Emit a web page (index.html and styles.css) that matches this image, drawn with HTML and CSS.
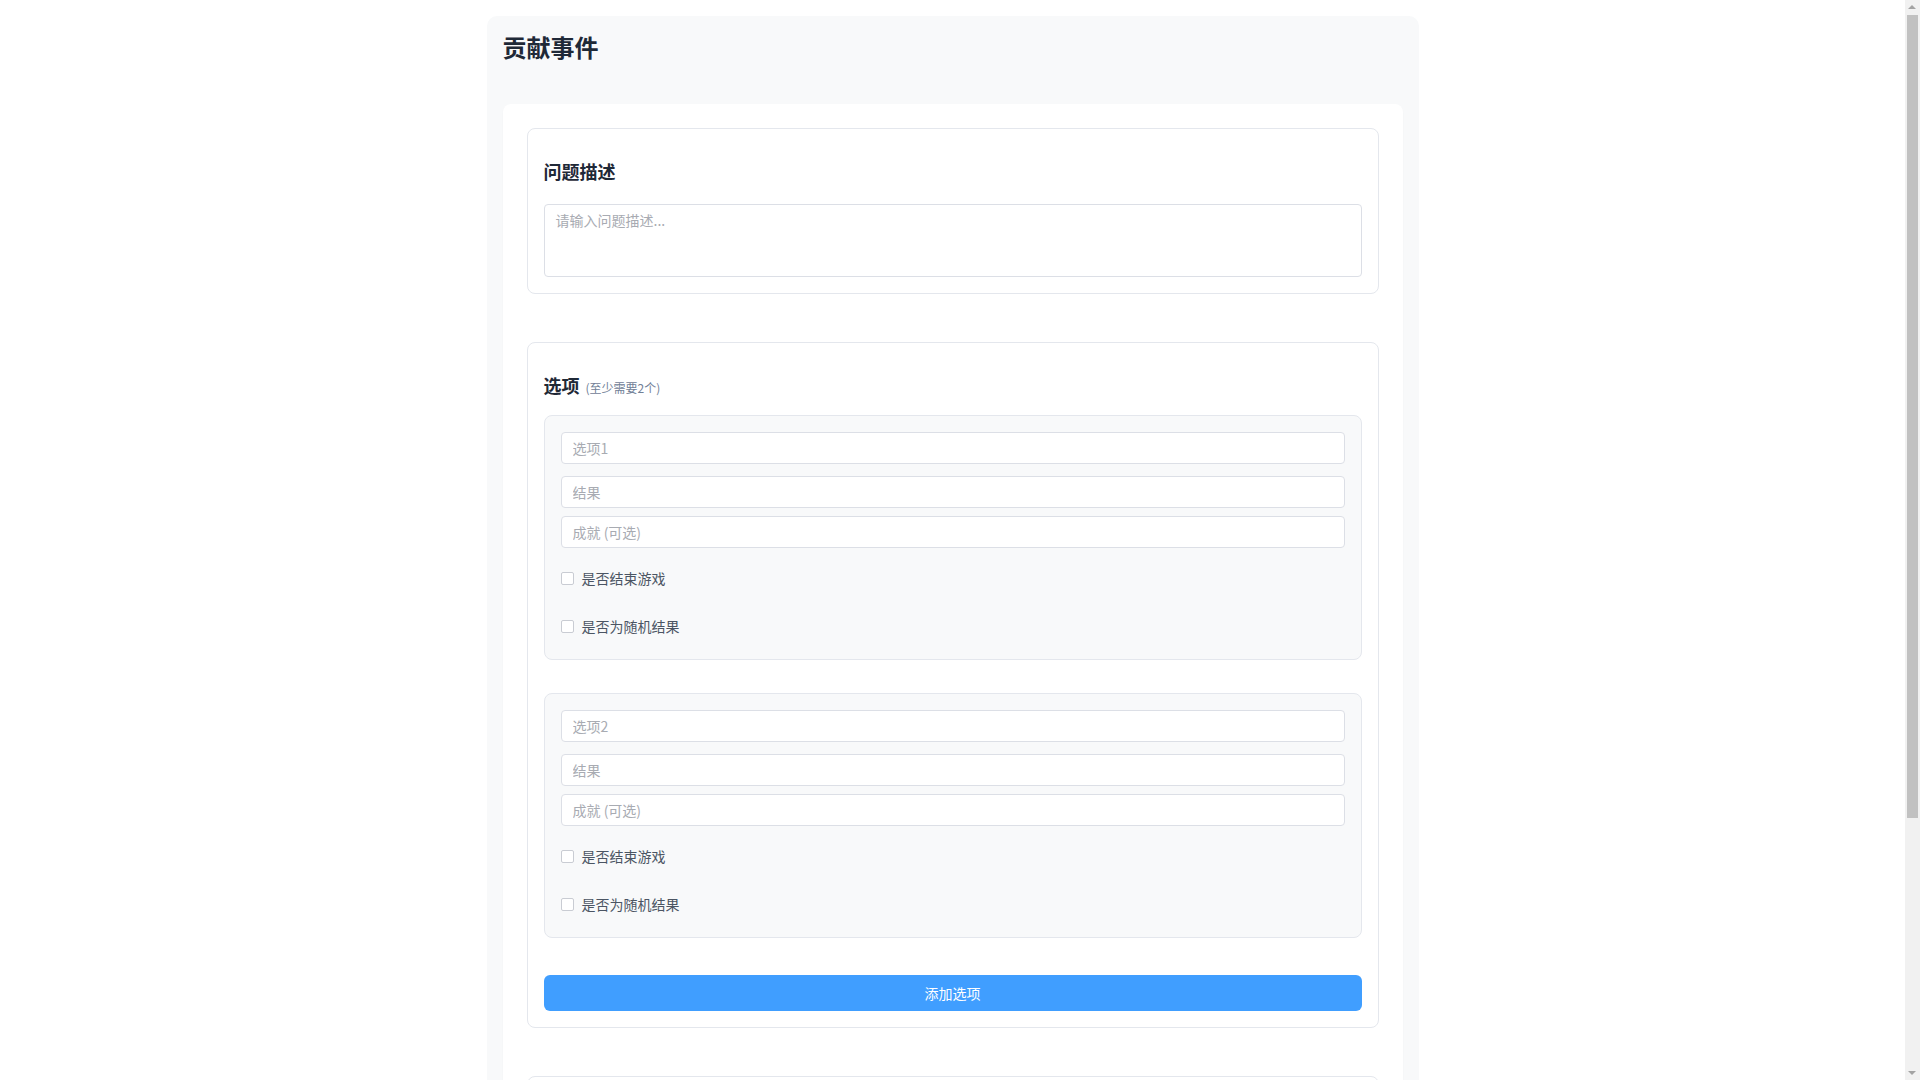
FILE: index.html
```html
<!DOCTYPE html>
<html lang="zh-CN">
<head>
<meta charset="utf-8">
<title>贡献事件</title>
<link rel="stylesheet" href="styles.css">
</head>
<body>
<div class="page">
  <h1 class="page-title">贡献事件</h1>
  <div class="card">
    <section class="section">
      <h3 class="section-title section-title-desc">问题描述</h3>
      <textarea class="textarea" placeholder="请输入问题描述..."></textarea>
    </section>

    <section class="section">
      <h3 class="section-title">选项<span class="hint">(至少需要2个)</span></h3>

      <div class="options">
        <div class="option">
          <input class="input input-first" type="text" placeholder="选项1">
          <input class="input input-second" type="text" placeholder="结果">
          <input class="input" type="text" placeholder="成就 (可选)">
          <label class="check-row check-first"><span class="box"></span><span class="check-text">是否结束游戏</span></label>
          <label class="check-row"><span class="box"></span><span class="check-text">是否为随机结果</span></label>
        </div>

        <div class="option">
          <input class="input input-first" type="text" placeholder="选项2">
          <input class="input input-second" type="text" placeholder="结果">
          <input class="input" type="text" placeholder="成就 (可选)">
          <label class="check-row check-first"><span class="box"></span><span class="check-text">是否结束游戏</span></label>
          <label class="check-row"><span class="box"></span><span class="check-text">是否为随机结果</span></label>
        </div>
      </div>

      <button class="btn-add" type="button">添加选项</button>
    </section>

    <section class="section">
      <h3 class="section-title">提交信息</h3>
      <input class="input" type="text" placeholder="你的昵称 (可选)">
      <button class="btn-add btn-submit" type="button">提交事件</button>
    </section>
  </div>
</div>

<div class="scrollbar" aria-hidden="true">
  <span class="arrow arrow-up"></span>
  <span class="thumb"></span>
  <span class="arrow arrow-down"></span>
</div>
</body>
</html>
```

FILE: styles.css
```css
html, body {
  margin: 0;
  padding: 0;
  background: #ffffff;
}

body {
  font-family: "Noto Sans CJK SC", "Noto Sans", sans-serif;
  color: #1f2937;
  padding-right: 15px;
}

.page {
  max-width: 900px;
  margin: 16px auto 40px;
  padding: 16px;
  background: #f8f9fa;
  border-radius: 10px;
}

.page-title {
  margin: 0 0 42px;
  font-size: 24px;
  line-height: 30px;
  font-weight: 700;
  color: #1f2937;
}

.card {
  background: #ffffff;
  border-radius: 8px;
  padding: 24px;
  box-shadow: 0 1px 2px rgba(0, 0, 0, 0.03);
}

.section {
  border: 1px solid #e4e7ed;
  border-radius: 8px;
  padding: 16px;
  margin-bottom: 48px;
  background: #ffffff;
}

.section:last-child {
  margin-bottom: 0;
}

.section-title {
  margin: 14px 0 15px;
  font-size: 18px;
  line-height: 24px;
  font-weight: 700;
  color: #1f2937;
}

.section-title-desc {
  margin-bottom: 21px;
}

.hint {
  margin-left: 6px;
  font-size: 12px;
  font-weight: 400;
  color: #718096;
}

.textarea {
  display: block;
  box-sizing: border-box;
  width: 100%;
  height: 73px;
  margin: 0;
  padding: 5px 11px;
  border: 1px solid #dcdfe6;
  border-radius: 4px;
  font-family: inherit;
  font-size: 14px;
  line-height: 1.5;
  color: #303133;
  resize: none;
  outline: none;
}

.textarea::placeholder,
.input::placeholder {
  color: #a8abb2;
}

.options {
  display: flex;
  flex-direction: column;
  gap: 33px;
  margin-bottom: 37px;
}

.option {
  background: #f8f9fa;
  border: 1px solid #e4e7ed;
  border-radius: 8px;
  padding: 16px 16px 18px;
}

.input {
  display: block;
  box-sizing: border-box;
  width: 100%;
  height: 32px;
  padding: 0 11px;
  border: 1px solid #dcdfe6;
  border-radius: 4px;
  background: #ffffff;
  font-family: inherit;
  font-size: 14px;
  color: #303133;
  outline: none;
}

.input-first {
  margin-bottom: 12px;
}

.input-second {
  margin-bottom: 8px;
}

.check-row {
  display: flex;
  align-items: center;
  height: 30px;
  margin-top: 18px;
  font-size: 14px;
  color: #4b5563;
  cursor: pointer;
}

.check-first {
  margin-top: 15px;
}

.box {
  box-sizing: border-box;
  width: 13px;
  height: 13px;
  border: 1px solid #c9ccd3;
  border-radius: 2px;
  background: #ffffff;
  margin-right: 8px;
  flex: none;
}

.check-text {
  line-height: 20px;
}

.btn-add {
  display: block;
  width: 100%;
  height: 36px;
  margin: 0;
  border: none;
  border-radius: 6px;
  background: #409eff;
  color: #ffffff;
  font-family: inherit;
  font-size: 14px;
  cursor: pointer;
}

.btn-submit {
  margin-top: 16px;
}

/* imitation of the browser's vertical scrollbar */
.scrollbar {
  position: fixed;
  top: 0;
  right: 0;
  width: 15px;
  height: 100vh;
  background: #f1f1f1;
}

.thumb {
  position: absolute;
  top: 15px;
  left: 2px;
  width: 11px;
  height: 803px;
  background: #c1c1c1;
}

.arrow {
  position: absolute;
  left: 3px;
  width: 0;
  height: 0;
  border-left: 4.5px solid transparent;
  border-right: 4.5px solid transparent;
}

.arrow-up {
  top: 5px;
  border-bottom: 4.5px solid #a3a3a3;
}

.arrow-down {
  bottom: 5px;
  border-top: 4.5px solid #a3a3a3;
}
```
